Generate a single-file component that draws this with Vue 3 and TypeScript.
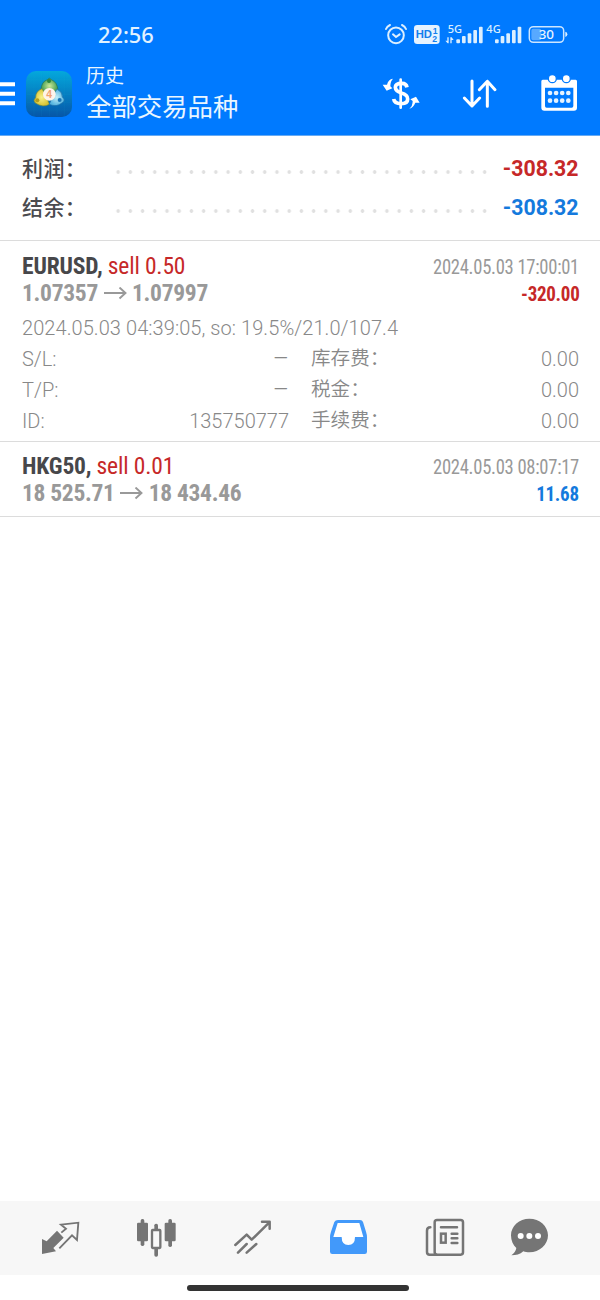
<script setup lang="ts">
interface Total { label: string; value: string; tone: string }
interface Detail { key: string; value: string; label: string; fee: string }
interface Deal {
  symbol: string; side: string; open: string; close: string
  time: string; profit: string; tone: string; note?: string; details: Detail[]
}

const totals: Total[] = [
  { label: '利润：', value: '-308.32', tone: 'red' },
  { label: '结余：', value: '-308.32', tone: 'blue' },
]

const deals: Deal[] = [
  {
    symbol: 'EURUSD,', side: 'sell 0.50', open: '1.07357', close: '1.07997',
    time: '2024.05.03 17:00:01', profit: '-320.00', tone: 'red',
    note: '2024.05.03 04:39:05, so: 19.5%/21.0/107.4',
    details: [
      { key: 'S/L:', value: '–', label: '库存费：', fee: '0.00' },
      { key: 'T/P:', value: '–', label: '税金：', fee: '0.00' },
      { key: 'ID:', value: '135750777', label: '手续费：', fee: '0.00' },
    ],
  },
  {
    symbol: 'HKG50,', side: 'sell 0.01', open: '18 525.71', close: '18 434.46',
    time: '2024.05.03 08:07:17', profit: '11.68', tone: 'blue', details: [],
  },
]
const bars = [0, 1, 2, 3, 4]
</script>

<template>
  <div class="screen">
    <header class="header">
      <div class="status">
        <span class="clock">22:56</span>
        <div class="indicators">
          <svg width="26.67" height="30" viewBox="40 30 80 90" fill="none" stroke="#dcefff" stroke-width="6" stroke-linecap="round">
            <circle cx="79" cy="76" r="23.5" />
            <path d="M49 57Q52 49 61 45M97 45Q106 49 109 57M70 73l9 8 11-8" />
          </svg>
          <svg width="33.33" height="30" viewBox="120 30 100 90">
            <rect x="132" y="45" width="77" height="57" rx="10" fill="#e6f3ff" />
            <g class="glyphs" fill="#147fed">
              <text x="137" y="85" font-size="33" textLength="49" lengthAdjust="spacingAndGlyphs">HD</text>
              <text x="188" y="71" font-size="26">1</text>
              <text x="187" y="97" font-size="26">2</text>
            </g>
          </svg>
          <svg width="41.67" height="30" viewBox="220 30 125 90" fill="#dcefff">
            <text class="net" x="234" y="70" font-size="32" textLength="43" lengthAdjust="spacingAndGlyphs">5G</text>
            <path d="M233 82h4v18h-3l-7-8h6zM242 82h4l6 8h-6v10h-4z" />
            <rect v-for="i in bars" :key="i" :x="260 + i * 17" :y="[88, 78, 70, 60, 50][i]" width="11" :height="[12, 22, 30, 40, 50][i]" rx="3" />
          </svg>
          <svg width="40" height="30" viewBox="345 30 120 90" fill="#dcefff">
            <text class="net" x="349" y="70" font-size="32" textLength="43" lengthAdjust="spacingAndGlyphs">4G</text>
            <rect v-for="i in bars" :key="i" :x="375 + i * 17" :y="[88, 78, 70, 60, 50][i]" width="11" :height="[12, 22, 30, 40, 50][i]" rx="3" />
          </svg>
          <svg width="45" height="30" viewBox="465 30 135 90">
            <rect x="478" y="50" width="103" height="47" rx="12" fill="none" stroke="#cde6ff" stroke-width="4.5" />
            <rect x="484" y="56" width="30" height="35" rx="6" fill="#58a9ff" />
            <path d="M586 65q6 1 6 8t-6 8z" fill="#dcefff" />
            <text class="net" x="506" y="87" font-size="38" textLength="46" lengthAdjust="spacingAndGlyphs" fill="#e6f3ff">30</text>
          </svg>
        </div>
      </div>

      <div class="toolbar">
        <svg class="menu" width="15" height="24" viewBox="0 0 15 24"><path d="M0 .3h15v4H0zM0 9.8h15v4H0zM0 19.2h15v4H0z" fill="#fff" /></svg>
        <svg class="logo" width="46" height="46" viewBox="78 210 138 138">
          <defs>
            <linearGradient id="tile" x1="0" y1="0" x2="0" y2="1"><stop offset="0" stop-color="#04a8dc" /><stop offset="1" stop-color="#0656a8" /></linearGradient>
            <radialGradient id="green"><stop offset="0" stop-color="#cdeb98" /><stop offset="1" stop-color="#3f9a50" /></radialGradient>
            <radialGradient id="gold"><stop offset="0" stop-color="#f8f28a" /><stop offset="1" stop-color="#d8c335" /></radialGradient>
            <radialGradient id="sky"><stop offset="0" stop-color="#c4eef8" /><stop offset="1" stop-color="#55b4df" /></radialGradient>
          </defs>
          <rect x="78" y="210" width="138" height="138" rx="30" fill="url(#tile)" />
          <path d="M102 212v134M125 212v134M148 212v134M171 212v134M194 212v134M80 235h134M80 258h134M80 281h134M80 304h134M80 327h134" stroke="#2eb8d8" stroke-opacity=".2" />
          <path d="M123 267Q124 242 142 236Q148 227 154 236Q172 243 174 268L165 278L130 276Z" fill="url(#green)" stroke="#277451" stroke-width="2" />
          <path d="M126 263Q107 270 107 290Q98 298 106 306Q128 321 148 310L139 286Z" fill="url(#gold)" stroke="#7b8b39" stroke-width="2" />
          <path d="M171 264Q188 273 187 288Q197 297 189 304Q170 320 148 310L158 286Z" fill="url(#sky)" stroke="#246fa9" stroke-width="2" />
          <circle cx="147" cy="240" r="6" fill="#2d853b" /><circle cx="112" cy="298" r="6" fill="#b39c1b" /><circle cx="179" cy="297" r="6" fill="#1974b6" />
          <circle cx="148" cy="280" r="19" fill="#fff4ea" />
          <text class="glyphs" x="139" y="291" font-size="31" fill="#f1a273">4</text>
        </svg>
        <div class="titles">
          <div class="section">历史</div>
          <div class="scope">全部交易品种</div>
        </div>
        <div class="actions">
          <svg width="42" height="42" viewBox="30 36 126 126" fill="none" stroke="#fff">
            <path d="M111 79Q109 67 96 67Q76 67 76 79Q76 90 94 96Q113 101 113 114Q113 128 94 128Q73 128 71 114" stroke-width="11" />
            <path d="M92 56v84" stroke-width="8" stroke-linecap="round" />
            <path d="M69 53Q55 54 51 71L38 71L50 89L67 82L61 76Q61 61 69 53ZM118 143Q130 140 136 125L149 125L138 107L121 115L128 120Q128 136 118 143Z" fill="#fff" stroke="none" />
          </svg>
          <svg width="42" height="42" viewBox="270 36 126 126" fill="none" stroke="#fff" stroke-width="9" stroke-linecap="round" stroke-linejoin="round">
            <path d="M309 60v75M286 111l23 24 23-24M355 136V61M331 86l24-25 23 25" />
          </svg>
          <svg width="42" height="42" viewBox="504 36 126 126">
            <path d="M518 56h99q4 0 4 5v79q0 9-9 9h-89q-9 0-9-9V61q0-5 4-5zM525 80v55q0 5 5 5h75q5 0 5-5V80z" fill="#fff" fill-rule="evenodd" />
            <g fill="#fff" stroke="#007aff" stroke-width="4"><circle cx="547" cy="53" r="12" /><circle cx="589" cy="53" r="12" /></g>
            <g fill="#e6f3ff"><circle v-for="n in 8" :key="n" :cx="540 + ((n - 1) % 4) * 18.3" :cy="n > 4 ? 119 : 96" r="7" /></g>
          </svg>
        </div>
      </div>
    </header>

    <section class="totals">
      <div v-for="t in totals" :key="t.label" class="total">
        <span class="total-label">{{ t.label }}</span>
        <span class="leader"></span>
        <span class="total-value" :class="t.tone">{{ t.value }}</span>
      </div>
    </section>

    <main>
      <article v-for="d in deals" :key="d.symbol" class="deal" :class="{ expanded: d.note }">
        <div class="line">
          <span class="narrow"><b class="symbol">{{ d.symbol }}</b> <span class="red side">{{ d.side }}</span></span>
          <span class="narrow time">{{ d.time }}</span>
        </div>
        <div class="line">
          <span class="narrow prices">
            <span>{{ d.open }}</span>
            <svg width="23" height="14" viewBox="0 0 23 14" fill="none" stroke="#999" stroke-width="1.9"><path d="M0 6h21.5M15.5 .5L21.5 6l-6 5.5" /></svg>
            <span>{{ d.close }}</span>
          </span>
          <span class="narrow profit" :class="d.tone">{{ d.profit }}</span>
        </div>
        <div v-if="d.note" class="extra">
          <div class="note">{{ d.note }}</div>
          <div v-for="r in d.details" :key="r.key" class="detail">
            <span>{{ r.key }}</span><span class="right" :class="{ dash: r.value === '–' }">{{ r.value }}</span>
            <span class="fee-label">{{ r.label }}</span><span class="right">{{ r.fee }}</span>
          </div>
        </div>
      </article>
    </main>

    <nav class="tabs">
      <svg viewBox="108 72 144 144">
        <path d="M171 122l20 21-31 31 8 10-42 8V147l14 7z" fill="#757575" />
        <path d="M184 128l14-12-15-12 52-6-4 52-15-14-38 39" fill="none" stroke="#757575" stroke-width="5.5" />
      </svg>
      <svg viewBox="396 72 144 144" fill="#757575">
        <rect x="411" y="98" width="33" height="56" rx="4" /><rect x="422" y="87" width="11" height="81" rx="5" />
        <rect x="494" y="98" width="33" height="56" rx="4" /><rect x="505" y="87" width="11" height="84" rx="5" />
        <rect x="463" y="101" width="11" height="99" rx="5" /><rect x="456" y="120" width="25" height="54" rx="2" fill="#f7f7f7" stroke="#757575" stroke-width="7" />
      </svg>
      <svg viewBox="684 72 144 144" fill="none" stroke="#757575" stroke-width="7.5" stroke-linecap="round" stroke-linejoin="round">
        <path d="M706 165l34-31 15 15 53-52M786 95h23v21M714 188l26-26M740 188l29-26" />
      </svg>
      <svg viewBox="72 72 144 144">
        <path d="M114 90h66q7 0 9 6l9 29q3 9 3 17v43q0 7-7 7H97q-7 0-7-7v-43q0-8 3-17l10-29q3-6 11-6z" fill="#4299fa" />
        <path d="M113 99l-13 42h25q0 24 20 24t20-24h25l-12-42z" fill="#fff" />
      </svg>
      <svg viewBox="360 72 144 144" fill="none" stroke="#757575" stroke-width="7.5" stroke-linecap="round">
        <rect x="404" y="90" width="85" height="104" rx="7" /><path d="M391 112q-10 0-10 10v64q0 8 8 8h20M423 112h48M455 131h17M455 145h17M455 159h17" />
        <rect x="423" y="131" width="14" height="27" />
      </svg>
      <svg class="chat" viewBox="648 72 144 144">
        <path d="M688 86c31 0 56 22 56 50s-25 51-56 51c-6 0-13-1-18-3-10 9-22 12-36 12 8-5 14-14 15-22-10-9-16-22-16-38 0-28 25-50 55-50z" fill="#757575" />
        <g fill="#fff"><circle cx="662" cy="138" r="9" /><circle cx="688" cy="138" r="9" /><circle cx="714" cy="138" r="9" /></g>
      </svg>
    </nav>
    <div class="home"><span class="pill"></span></div>
  </div>
</template>

<style scoped>
.screen { display: flex; flex-direction: column; width: 600px; height: 1300px; overflow: hidden; background: #fff; font-family: Roboto, "Noto Sans CJK SC", sans-serif; color: #999; }
.screen svg { display: block; flex: none; }
.header { box-sizing: border-box; height: 136px; background: #007aff; border-bottom: 1px solid #67aaf2; }
.status { box-sizing: border-box; height: 52px; padding: 0 0 0 98px; display: flex; align-items: flex-start; }
.clock { width: 285.33px; padding-top: 20px; font: 500 21.8px/29px "Noto Sans", sans-serif; color: #e2f2ff; }
.indicators { display: flex; padding-top: 20px; }
.glyphs { font-family: "Liberation Sans", sans-serif; font-weight: 700; }
.net { font-family: "Noto Sans", sans-serif; font-weight: 500; }
.toolbar { height: 83px; display: flex; align-items: center; }
.logo { margin-left: 11px; }
.titles { margin-left: 14px; width: 294px; color: #eaf6ff; }
.section { font-size: 19px; line-height: 28px; }
.scope { font-size: 25.4px; line-height: 34px; margin-top: -1px; }
.actions { display: flex; gap: 37px; }
.totals { box-sizing: border-box; height: 105px; padding: 13px 21.5px 0 22px; border-bottom: 1px solid #dcdcdc; }
.total { height: 39px; display: flex; align-items: center; }
.total-label { width: 90.4px; margin-top: -4px; font-size: 21px; font-weight: 500; letter-spacing: .4px; color: #4b4b4f; }
.leader { width: 379.2px; height: 8px; margin-top: 7px; background: radial-gradient(circle, #e0e0e0 1.5px, transparent 2.1px) 0 0 / 12.23px 8px repeat-x; }
.total-value { flex: 1; text-align: right; font-size: 21.3px; font-weight: 700; white-space: nowrap; }
.red { color: #c62828; }
.blue { color: #147add; }
.deal { padding: 11px 21px 9px 22px; border-bottom: 1px solid #dcdcdc; }
.deal.expanded { padding-top: 12px; padding-bottom: 5px; }
.line { display: flex; justify-content: space-between; height: 27px; line-height: 27px; white-space: nowrap; }
.narrow { font-size: 23.5px; font-stretch: 75%; letter-spacing: -.3px; }
.symbol { color: #47474a; letter-spacing: -.15px; }
.side { letter-spacing: -.15px; }
.time, .profit { font-size: 20px; padding-top: 1px; transform-origin: right center; }
.time { transform: scaleX(.93); }
.profit { font-weight: 700; transform: scaleX(.95); }
.prices { display: flex; align-items: center; gap: 5.5px; font-weight: 700; }
.extra { padding-top: 5px; font-size: 20px; font-weight: 350; color: #888; }
.note { height: 31px; line-height: 32px; letter-spacing: .07px; white-space: nowrap; }
.detail { display: grid; grid-template-columns: 70px 197px 110px 1fr; height: 31px; line-height: 32px; }
.fee-label { padding-left: 22px; font-size: 19.6px; white-space: nowrap; }
.right { text-align: right; }
.dash { font-size: 25px; }
.tabs { margin-top: auto; height: 74px; padding: 0 12px; display: flex; align-items: center; justify-content: space-around; background: #f7f7f7; }
.tabs svg { width: 48px; height: 48px; }
.tabs .chat { overflow: visible; }
.home { height: 25px; display: flex; justify-content: center; }
.pill { width: 222px; height: 6px; margin: 10px 4px 0 0; border-radius: 3px; background: #333; }
</style>
